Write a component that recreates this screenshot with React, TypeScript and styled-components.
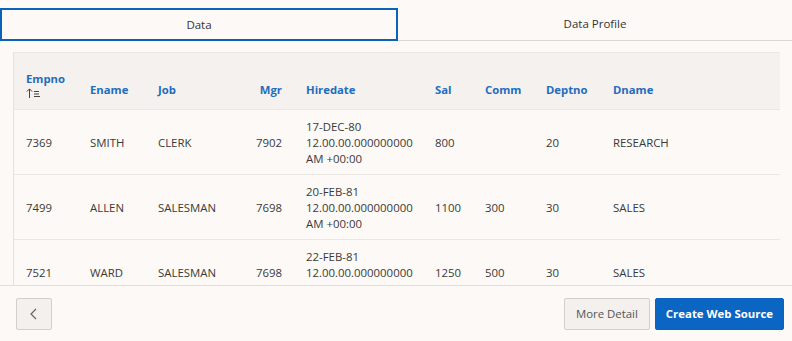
import React from 'react';
import styled, { createGlobalStyle } from 'styled-components';

const GlobalStyle = createGlobalStyle`
  html, body {
    margin: 0;
    padding: 0;
    background: #fcf9f6;
    font-family: 'Open Sans', 'Noto Sans', sans-serif;
    color: #333;
  }
`;

const Page = styled.div`
  width: 792px;
  height: 341px;
  display: flex;
  flex-direction: column;
  background: #fcf9f6;
  overflow: hidden;
`;

const TabBar = styled.div`
  display: flex;
  margin-top: 8px;
  height: 33px;
`;

const Tab = styled.div<{ $active?: boolean }>`
  flex: 1;
  display: flex;
  align-items: center;
  justify-content: center;
  font-size: 11.5px;
  color: #333;
  box-sizing: border-box;
  border: ${(p) => (p.$active ? '2px solid #0b63b8' : 'none')};
  border-bottom: ${(p) => (p.$active ? '2px solid #0b63b8' : '1px solid #dcd8d4')};
  padding-bottom: ${(p) => (p.$active ? '0' : '1px')};
`;

const Content = styled.div`
  padding: 11px 12px 0 13px;
  height: 233px;
  box-sizing: content-box;
`;

const TableWrap = styled.div`
  height: 233px;
  overflow: hidden;
  border-left: 1px solid #e6e2de;
  border-top: 1px solid #ebe7e3;
`;

const Table = styled.table`
  width: 100%;
  border-collapse: collapse;
  table-layout: fixed;
`;

const Th = styled.th<{ $align?: 'left' | 'right' }>`
  background: #f4f1ee;
  color: #1f6dbd;
  font-size: 11.3px;
  font-weight: 700;
  text-align: ${(p) => p.$align ?? 'left'};
  vertical-align: bottom;
  height: 56px;
  padding: 0 12px 11px 12px;
  line-height: 16px;
  box-sizing: border-box;
`;

const Td = styled.td<{ $align?: 'left' | 'right' }>`
  font-size: 11.4px;
  line-height: 16px;
  color: #3a3a3a;
  text-align: ${(p) => p.$align ?? 'left'};
  vertical-align: middle;
  height: 65px;
  padding: 2px 12px 0 12px;
  border-top: 1px solid #ebe7e3;
  box-sizing: border-box;
`;

const Line = styled.div`
  white-space: nowrap;
`;

const SortMark = styled.svg`
  display: block;
  margin-top: 1px;
`;

const Footer = styled.div`
  flex: 1;
  border-top: 1px solid #e2deda;
  display: flex;
  align-items: center;
  justify-content: space-between;
  padding: 0 8px 0 16px;
`;

const Actions = styled.div`
  display: flex;
  gap: 5px;
`;

const Button = styled.button<{ $primary?: boolean }>`
  height: 32px;
  box-sizing: border-box;
  font-family: inherit;
  font-size: 11.4px;
  padding: 0 ${(p) => (p.$primary ? 10 : 11)}px;
  border-radius: 2px;
  cursor: pointer;
  border: 1px solid ${(p) => (p.$primary ? '#0b63c0' : '#d3cfcb')};
  background: ${(p) => (p.$primary ? '#0b65c2' : '#f3f0ed')};
  color: ${(p) => (p.$primary ? '#fff' : '#555')};
  font-weight: ${(p) => (p.$primary ? 700 : 400)};
`;

const BackButton = styled(Button)`
  width: 36px;
  padding: 0;
  display: flex;
  align-items: center;
  justify-content: center;
`;

type Col = { key: string; label: string; width: number; align?: 'left' | 'right' };

const columns: Col[] = [
  { key: 'empno', label: 'Empno', width: 64 },
  { key: 'ename', label: 'Ename', width: 68 },
  { key: 'job', label: 'Job', width: 90 },
  { key: 'mgr', label: 'Mgr', width: 58, align: 'right' },
  { key: 'hiredate', label: 'Hiredate', width: 129 },
  { key: 'sal', label: 'Sal', width: 50 },
  { key: 'comm', label: 'Comm', width: 61 },
  { key: 'deptno', label: 'Deptno', width: 67 },
  { key: 'dname', label: 'Dname', width: 179 },
];

const rows = [
  { empno: '7369', ename: 'SMITH', job: 'CLERK', mgr: '7902', hiredate: '17-DEC-80', sal: '800', comm: '', deptno: '20', dname: 'RESEARCH' },
  { empno: '7499', ename: 'ALLEN', job: 'SALESMAN', mgr: '7698', hiredate: '20-FEB-81', sal: '1100', comm: '300', deptno: '30', dname: 'SALES' },
  { empno: '7521', ename: 'WARD', job: 'SALESMAN', mgr: '7698', hiredate: '22-FEB-81', sal: '1250', comm: '500', deptno: '30', dname: 'SALES' },
];

const SortIcon = () => (
  <SortMark width="15" height="10" viewBox="0 0 15 10" fill="none" stroke="#444" strokeWidth="1">
    <path d="M3.5 10V1M0.8 3.6L3.5 0.9L6.2 3.6" />
    <path d="M8 3.5h5M8 6h5M8 8.5h6" />
  </SortMark>
);

export default function App() {
  return (
    <Page>
      <GlobalStyle />
      <TabBar>
        <Tab $active>Data</Tab>
        <Tab>Data Profile</Tab>
      </TabBar>
      <Content>
        <TableWrap>
          <Table>
            <colgroup>
              {columns.map((c) => (
                <col key={c.key} style={{ width: c.width }} />
              ))}
            </colgroup>
            <thead>
              <tr>
                {columns.map((c) => (
                  <Th key={c.key} $align={c.align}>
                    {c.label}
                    {c.key === 'empno' && <SortIcon />}
                  </Th>
                ))}
              </tr>
            </thead>
            <tbody>
              {rows.map((r) => (
                <tr key={r.empno}>
                  {columns.map((c) => (
                    <Td key={c.key} $align={c.align}>
                      {c.key === 'hiredate' ? (
                        <>
                          <Line>{r.hiredate}</Line>
                          <Line>12.00.00.000000000</Line>
                          <Line>AM +00:00</Line>
                        </>
                      ) : (
                        (r as Record<string, string>)[c.key]
                      )}
                    </Td>
                  ))}
                </tr>
              ))}
            </tbody>
          </Table>
        </TableWrap>
      </Content>
      <Footer>
        <BackButton aria-label="Back">
          <svg width="10" height="12" viewBox="0 0 10 12" fill="none" stroke="#666" strokeWidth="1.2">
            <path d="M7 1L2 6L7 11" />
          </svg>
        </BackButton>
        <Actions>
          <Button>More Detail</Button>
          <Button $primary>Create Web Source</Button>
        </Actions>
      </Footer>
    </Page>
  );
}
